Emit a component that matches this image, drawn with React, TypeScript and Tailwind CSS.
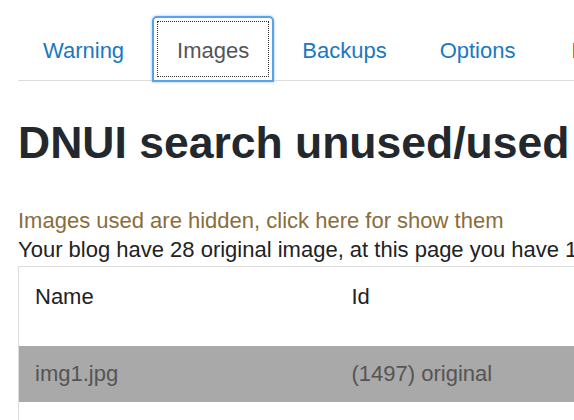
const tabs = ["Warning", "Images", "Backups", "Options"];

function Tabs() {
  return (
    <ul className="flex items-end h-[81px] border-b border-[#dddddd] pl-0 whitespace-nowrap">
      {tabs.map((tab) => {
        const active = tab === "Images";
        return (
          <li key={tab} className="mr-[3px] shrink-0">
            {active ? (
              <a className="relative flex items-center h-[66px] pt-[2px] px-[23px] mb-[-2px] rounded-t-[5px] border-2 border-[#5aa2e6] shadow-[0_0_3px_#8cc4f5] bg-white text-[#555555]">
                <span className="absolute inset-[3px] border border-dotted border-[#333333]" />
                Images
              </a>
            ) : (
              <a className="flex items-center h-[64px] pt-[4px] px-[25px] text-[#1a78c2]">{tab}</a>
            )}
          </li>
        );
      })}
      <li className="shrink-0 ml-[3px]">
        <a className="flex items-center h-[64px] pt-[4px] px-[25px] text-[#c9302c]">Donate</a>
      </li>
    </ul>
  );
}

export default function App() {
  return (
    <div
      className="w-[574px] h-[420px] overflow-hidden bg-white pl-[18px] text-[22px] leading-[29px] text-[#222222]"
      style={{ fontFamily: '"Liberation Sans", Arial, sans-serif' }}
    >
      <div className="w-[700px]">
        <Tabs />
        <h1 className="mt-[35px] text-[44.5px] leading-[53px] font-bold text-[#23282d] whitespace-nowrap">
          DNUI search unused/used images
        </h1>
        <p className="mt-[37px] text-[#8a6d3b] whitespace-nowrap">Images used are hidden, click here for show them</p>
        <p className="whitespace-nowrap">Your blog have 28 original image, at this page you have 1 image</p>
        <table className="mt-[2px] w-[760px] border border-[#dddddd] border-collapse text-left">
          <thead>
            <tr className="h-[79px] align-top">
              <th className="w-[317px] pl-[16px] pt-[15px] font-normal">Name</th>
              <th className="pl-[16px] pt-[15px] font-normal">Id</th>
            </tr>
          </thead>
          <tbody>
            <tr className="h-[56px] bg-[#a9a9a9] text-[#555555]">
              <td className="pl-[16px]">img1.jpg</td>
              <td className="pl-[16px]">(1497) original</td>
            </tr>
            <tr className="h-[56px]">
              <td className="pl-[16px]"></td>
              <td className="pl-[16px]"></td>
            </tr>
          </tbody>
        </table>
      </div>
    </div>
  );
}
